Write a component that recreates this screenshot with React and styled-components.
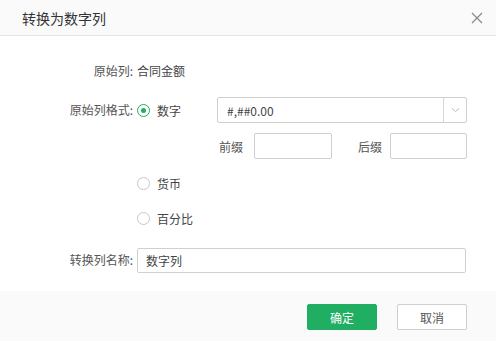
import styled, { createGlobalStyle } from "styled-components";

const GlobalStyle = createGlobalStyle`
  html, body {
    margin: 0;
    padding: 0;
    background: #fff;
  }
  body {
    font-family: "Noto Sans CJK SC", "Noto Sans", "Liberation Sans", sans-serif;
    font-size: 12px;
    color: #555;
  }
`;

const Dialog = styled.div`
  width: 496px;
  height: 341px;
  display: flex;
  flex-direction: column;
  background: #fff;
`;

const Header = styled.div`
  height: 35px;
  flex-shrink: 0;
  display: flex;
  align-items: center;
  justify-content: space-between;
  padding: 0 12px 0 22px;
  background: #fafafa;
  border-bottom: 1px solid #e6e6e6;
`;

const Title = styled.h2`
  margin: 0;
  font-size: 14px;
  font-weight: normal;
  color: #333;
`;

const Close = styled.button`
  width: 14px;
  height: 14px;
  padding: 0;
  border: none;
  background: none;
  display: flex;
  align-items: center;
  justify-content: center;
  cursor: pointer;
`;

const Body = styled.div`
  flex: 1;
  padding: 22px 30px 0 0;
  display: flex;
  flex-direction: column;
`;

const Row = styled.div`
  display: flex;
  align-items: ${(p) => (p.$top ? "flex-start" : "center")};
  min-height: 24px;
  margin-top: ${(p) => p.$mt || 0}px;
`;

const Label = styled.div`
  width: 137px;
  flex-shrink: 0;
  text-align: right;
  padding-right: 4px;
  box-sizing: border-box;
  color: #555;
  line-height: 26px;
`;

const Value = styled.div`
  color: #444;
  line-height: 24px;
`;

const Options = styled.div`
  flex: 1;
  display: flex;
  flex-direction: column;
`;

const FormatLine = styled.div`
  display: flex;
  align-items: center;
`;

const Radio = styled.label`
  display: flex;
  align-items: center;
  gap: 7px;
  width: 80px;
  height: ${(p) => p.$h || 26}px;
  margin-top: ${(p) => p.$mt || 0}px;
  flex-shrink: 0;
  color: #444;
  cursor: pointer;
`;

const Dot = styled.span`
  width: 13px;
  height: 13px;
  box-sizing: border-box;
  border-radius: 50%;
  border: 1px solid ${(p) => (p.$checked ? "#1fae62" : "#c8c8c8")};
  display: flex;
  align-items: center;
  justify-content: center;
  background: #fff;
  &::after {
    content: "";
    width: 5px;
    height: 5px;
    border-radius: 50%;
    background: ${(p) => (p.$checked ? "#1fae62" : "transparent")};
  }
`;

const Select = styled.div`
  flex: 1;
  height: 26px;
  box-sizing: border-box;
  border: 1px solid #d0d0d0;
  border-radius: 2px;
  display: flex;
  align-items: stretch;
`;

const SelectText = styled.div`
  flex: 1;
  padding-left: 9px;
  display: flex;
  align-items: center;
  color: #444;
`;

const Arrow = styled.div`
  width: 22px;
  border-left: 1px solid #d8d8d8;
  display: flex;
  align-items: center;
  justify-content: center;
`;

const AffixLine = styled.div`
  display: flex;
  align-items: center;
  margin: 10px 0 0 80px;
`;

const AffixLabel = styled.span`
  width: ${(p) => p.$w}px;
  padding-left: 2px;
  color: #555;
  box-sizing: border-box;
`;

const Input = styled.input`
  box-sizing: border-box;
  width: ${(p) => (p.$w ? `${p.$w}px` : "auto")};
  flex: ${(p) => (p.$w ? "none" : 1)};
  min-width: 0;
  height: ${(p) => p.$h || 26}px;
  border: 1px solid #d0d0d0;
  border-radius: 2px;
  padding: 0 8px;
  font: inherit;
  color: #444;
  outline: none;
`;

const Footer = styled.div`
  height: 50px;
  flex-shrink: 0;
  background: #fafafa;
  display: flex;
  justify-content: flex-end;
  align-items: flex-start;
  gap: 20px;
  padding: 13px 29px 0 0;
  box-sizing: border-box;
`;

const Button = styled.button`
  width: 70px;
  height: 26px;
  border-radius: 2px;
  font: inherit;
  font-size: 12px;
  cursor: pointer;
  border: 1px solid ${(p) => (p.$primary ? "#1fae62" : "#cfcfcf")};
  background: ${(p) => (p.$primary ? "#1fae62" : "#fff")};
  color: ${(p) => (p.$primary ? "#fff" : "#555")};
`;

export default function App() {
  return (
    <>
      <GlobalStyle />
      <Dialog>
        <Header>
          <Title>转换为数字列</Title>
          <Close aria-label="关闭">
            <svg width="12" height="12" viewBox="0 0 12 12">
              <path d="M1 1L11 11M11 1L1 11" stroke="#888" strokeWidth="1.2" fill="none" />
            </svg>
          </Close>
        </Header>
        <Body>
          <Row>
            <Label>原始列:</Label>
            <Value>合同金额</Value>
          </Row>
          <Row $top $mt={13}>
            <Label>原始列格式:</Label>
            <Options>
              <FormatLine>
                <Radio>
                  <Dot $checked />
                  数字
                </Radio>
                <Select>
                  <SelectText>#,##0.00</SelectText>
                  <Arrow>
                    <svg width="9" height="6" viewBox="0 0 9 6">
                      <path d="M1 1.5L4.5 4.5L8 1.5" stroke="#bbb" strokeWidth="1" fill="none" />
                    </svg>
                  </Arrow>
                </Select>
              </FormatLine>
              <AffixLine>
                <AffixLabel $w={37}>前缀</AffixLabel>
                <Input $w={78} />
                <AffixLabel $w={24} />
                <AffixLabel $w={34}>后缀</AffixLabel>
                <Input $w={77} />
              </AffixLine>
              <Radio $h={24} $mt={12}>
                <Dot />
                货币
              </Radio>
              <Radio $h={24} $mt={11}>
                <Dot />
                百分比
              </Radio>
            </Options>
          </Row>
          <Row $mt={17}>
            <Label>转换列名称:</Label>
            <Input defaultValue="数字列" $h={25} />
          </Row>
        </Body>
        <Footer>
          <Button $primary>确定</Button>
          <Button>取消</Button>
        </Footer>
      </Dialog>
    </>
  );
}
